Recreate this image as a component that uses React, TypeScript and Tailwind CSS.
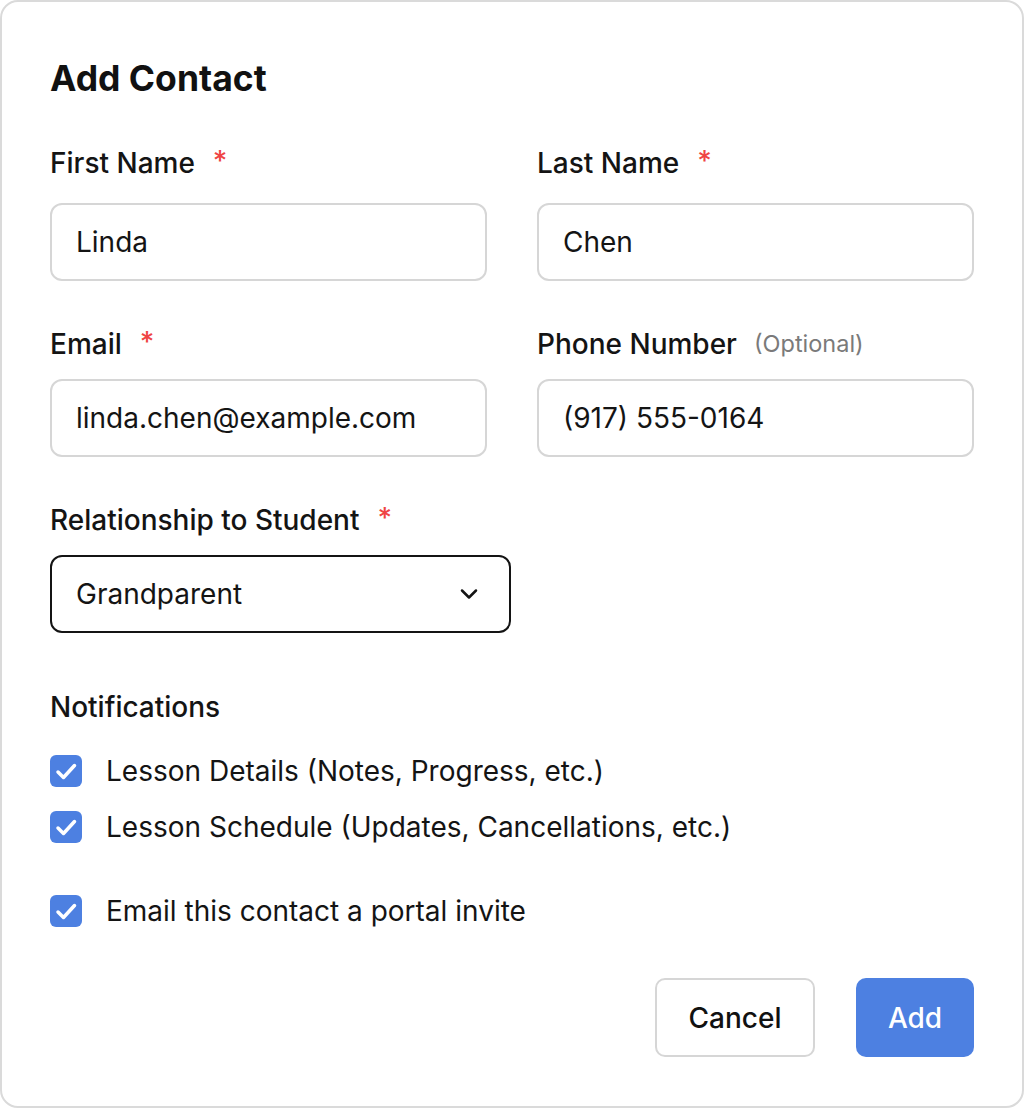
import React from "react";

function Label({ text, required, optional, className = "" }: { text: string; required?: boolean; optional?: boolean; className?: string }) {
  return (
    <div className={`flex items-center h-[34px] text-[28px] leading-[34px] font-medium text-[#141414] ${className}`}>
      <span>{text}</span>
      {required && <span className="ml-[18px] text-[#ef4444] self-start leading-[30px]">*</span>}
      {optional && <span className="ml-[17px] text-[23.5px] font-normal text-[#7a7a7a]">(Optional)</span>}
    </div>
  );
}

function Field({ value }: { value: string }) {
  return (
    <div className="h-[78px] rounded-[12px] border-2 border-[#d6d6d6] px-[24px] flex items-center text-[28px] text-[#141414]">
      {value}
    </div>
  );
}

function Check({ text }: { text: string }) {
  return (
    <div className="flex items-center h-[34px]">
      <div className="w-[32px] h-[32px] shrink-0 rounded-[6px] bg-[#4d80e1]">
        <svg width="32" height="32" viewBox="0 0 32 32" fill="none" stroke="white" strokeWidth="3.5" strokeLinecap="round" strokeLinejoin="round">
          <path d="M8 17l5.5 5.5L24.5 10.5" />
        </svg>
      </div>
      <span className="ml-[24px] text-[28px] leading-[34px] text-[#141414]">{text}</span>
    </div>
  );
}

export default function App() {
  return (
    <div className="w-[1024px] h-[1108px] bg-white" style={{ fontFamily: "Inter, 'Noto Sans', sans-serif" }}>
      <div className="w-full h-full border-2 border-[#dadada] rounded-[18px] bg-white pl-[48px] pr-[48px] pt-[55px]">
        <h1 className="text-[35.5px] leading-[44px] font-bold text-[#111]">Add Contact</h1>

        <div className="grid grid-cols-2 gap-x-[50px] mt-[45px]">
          <div>
            <Label text="First Name" required />
            <div className="mt-[23px]"><Field value="Linda" /></div>
          </div>
          <div>
            <Label text="Last Name" required />
            <div className="mt-[23px]"><Field value="Chen" /></div>
          </div>
          <div className="mt-[46px]">
            <Label text="Email" required />
            <div className="mt-[18px]"><Field value="linda.chen@example.com" /></div>
          </div>
          <div className="mt-[46px]">
            <Label text="Phone Number" optional />
            <div className="mt-[18px]"><Field value="(917) 555-0164" /></div>
          </div>
        </div>

        <div className="mt-[46px]">
          <Label text="Relationship to Student" required />
          <div className="mt-[18px] w-[461px] h-[78px] rounded-[12px] border-2 border-[#141414] pl-[24px] pr-[29px] flex items-center justify-between text-[28px] text-[#141414]">
            <span>Grandparent</span>
            <svg width="22" height="14" viewBox="0 0 22 14" fill="none" stroke="#141414" strokeWidth="2.5" strokeLinecap="round" strokeLinejoin="round">
              <path d="M4 3.5l7 7 7-7" />
            </svg>
          </div>
        </div>

        <div className="mt-[57px]">
          <Label text="Notifications" />
          <div className="mt-[30px] flex flex-col gap-[22px]">
            <Check text="Lesson Details (Notes, Progress, etc.)" />
            <Check text="Lesson Schedule (Updates, Cancellations, etc.)" />
          </div>
          <div className="mt-[50px]">
            <Check text="Email this contact a portal invite" />
          </div>
        </div>

        <div className="mt-[50px] flex justify-end gap-[41px]">
          <button className="w-[160px] h-[79px] rounded-[10px] border-2 border-[#d6d6d6] bg-white text-[28px] font-medium text-[#111]">Cancel</button>
          <button className="w-[118px] h-[79px] rounded-[10px] bg-[#4d80e1] text-[28px] font-medium text-white">Add</button>
        </div>
      </div>
    </div>
  );
}
